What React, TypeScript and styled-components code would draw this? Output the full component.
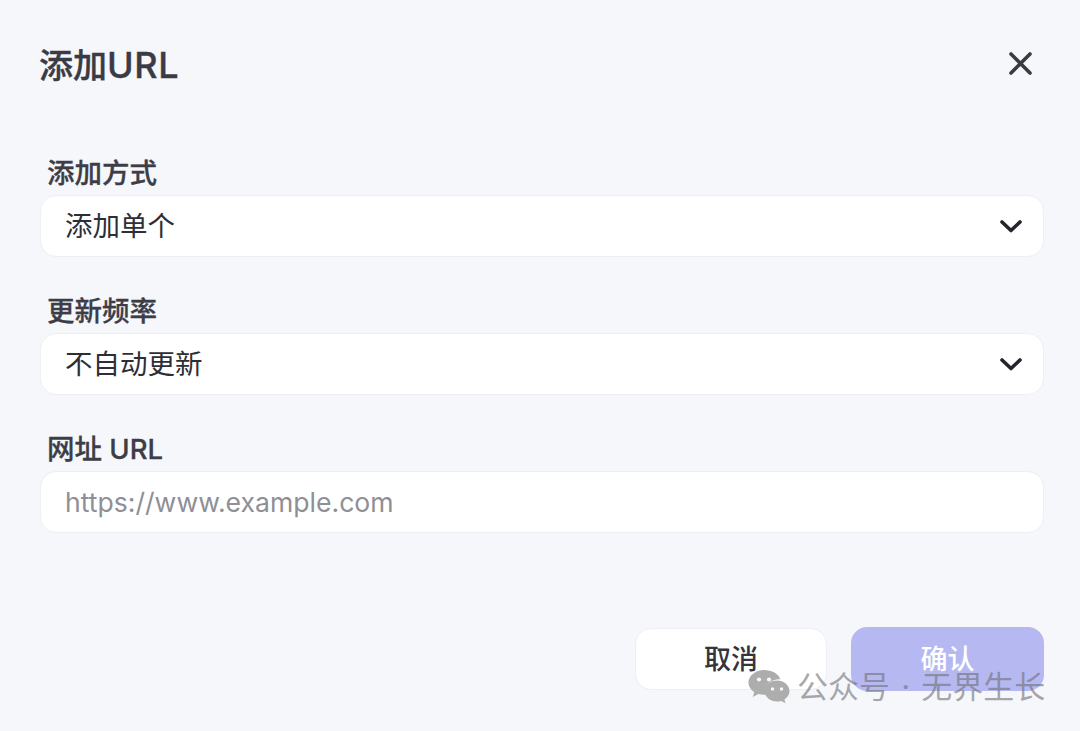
import React from 'react';
import styled, { createGlobalStyle } from 'styled-components';

const GlobalStyle = createGlobalStyle`
  html, body {
    margin: 0;
    padding: 0;
    background: #f6f7fb;
  }
  * {
    box-sizing: border-box;
  }
`;

const FONT = `Inter, "Noto Sans CJK SC", sans-serif`;

const Dialog = styled.div`
  position: relative;
  width: 1080px;
  height: 731px;
  padding: 39px 36px 0 40px;
  background: #f6f7fb;
  font-family: ${FONT};
  overflow: hidden;
`;

const Header = styled.div`
  display: flex;
  align-items: center;
  justify-content: space-between;
  height: 52px;
  margin-bottom: 64px;
`;

const Title = styled.h1`
  margin: 0 0 0 -1px;
  font-size: 34px;
  font-weight: 500;
  line-height: 52px;
  color: #3b3b46;
  -webkit-text-stroke: 0.4px #3b3b46;
`;

const TitleLatin = styled.span`
  font-size: 36px;
  letter-spacing: 0.6px;
`;

const CloseButton = styled.button`
  display: flex;
  padding: 0;
  margin: -3px 11px 0 0;
  border: none;
  background: none;
  color: #3a3a45;
`;

const Field = styled.div`
  margin-bottom: 36px;
`;

const Label = styled.div`
  height: 37px;
  margin-bottom: 3px;
  padding-left: 7px;
  font-size: 27.5px;
  font-weight: 500;
  line-height: 37px;
  color: #3d3d48;
  -webkit-text-stroke: 0.3px #3d3d48;
`;

const Control = styled.div`
  display: flex;
  align-items: center;
  justify-content: space-between;
  height: 62px;
  padding: 0 20px 0 24px;
  background: #fff;
  border: 1px solid #eeeef3;
  border-radius: 16px;
`;

const Value = styled.span<{ $placeholder?: boolean }>`
  font-size: ${p => (p.$placeholder ? '26.6px' : '27.5px')};
  line-height: 40px;
  color: ${p => (p.$placeholder ? '#8f8f96' : '#2e2e36')};
`;

const Footer = styled.div`
  display: flex;
  justify-content: flex-end;
  align-items: center;
  gap: 24px;
  margin-top: 94px;
`;

const Button = styled.button<{ $primary?: boolean }>`
  width: ${p => (p.$primary ? '193px' : '192px')};
  height: ${p => (p.$primary ? '64px' : '62px')};
  padding: 0 0 4px;
  font-family: ${FONT};
  font-size: 27px;
  font-weight: 500;
  color: ${p => (p.$primary ? '#fff' : '#34343d')};
  background: ${p => (p.$primary ? '#b6b9f1' : '#fff')};
  border: ${p => (p.$primary ? 'none' : '1px solid #eeeef3')};
  border-radius: 16px;
`;

const Watermark = styled.div`
  position: absolute;
  left: 748px;
  top: 666px;
  display: flex;
  align-items: center;
  gap: 7px;
  font-size: 31px;
  word-spacing: 2.5px;
  line-height: 42px;
  color: rgba(110, 110, 115, 0.6);
  white-space: nowrap;
`;

const Chevron = () => (
  <svg width="24" height="24" viewBox="0 0 24 24" fill="none" stroke="#24242c" strokeWidth="3.6" strokeLinecap="round" strokeLinejoin="round">
    <path d="M3 8l9 8.500L21 8" />
  </svg>
);

const WechatIcon = () => (
  <svg width="42" height="36" viewBox="0 0 42 36">
    <path d="M16 1C7.500 1 .5 6.600.5 13.500c0 4 2.300 7.400 5.800 9.700L4.800 28l5.600-3c1.800.5 3.700.8 5.600.8.6 0 1.200 0 1.800-.1-.4-1.200-.6-2.400-.6-3.700 0-6.500 6-11.700 14-11.700h1.100C30.700 4.900 24 1 16 1z" fill="#adadad" />
    <path d="M41.500 22c0-5.800-5.800-10.500-12.500-10.500S16.500 16.200 16.500 22 22.300 32.500 29 32.500c1.500 0 2.900-.2 4.200-.6l4.300 2.300-1.100-3.800c3-2 5.100-4.900 5.100-8.400z" fill="#adadad" />
    <circle cx="11" cy="10.500" r="2.100" fill="#f6f7fb" />
    <circle cx="21" cy="10.500" r="2.100" fill="#f6f7fb" />
    <circle cx="24.500" cy="20" r="1.700" fill="#f6f7fb" />
    <circle cx="33.500" cy="20" r="1.700" fill="#f6f7fb" />
  </svg>
);

export default function App() {
  return (
    <Dialog>
      <GlobalStyle />
      <Header>
        <Title>添加<TitleLatin>URL</TitleLatin></Title>
        <CloseButton>
          <svg width="25" height="25" viewBox="0 0 25 25" fill="none" stroke="currentColor" strokeWidth="3.6" strokeLinecap="round">
            <path d="M3 3l19 19M22 3L3 22" />
          </svg>
        </CloseButton>
      </Header>
      <Field>
        <Label>添加方式</Label>
        <Control>
          <Value>添加单个</Value>
          <Chevron />
        </Control>
      </Field>
      <Field>
        <Label>更新频率</Label>
        <Control>
          <Value>不自动更新</Value>
          <Chevron />
        </Control>
      </Field>
      <Field>
        <Label>网址 URL</Label>
        <Control>
          <Value $placeholder>https://www.example.com</Value>
        </Control>
      </Field>
      <Footer>
        <Button>取消</Button>
        <Button $primary>确认</Button>
      </Footer>
      <Watermark>
        <WechatIcon />
        <span>公众号 · 无界生长</span>
      </Watermark>
    </Dialog>
  );
}
